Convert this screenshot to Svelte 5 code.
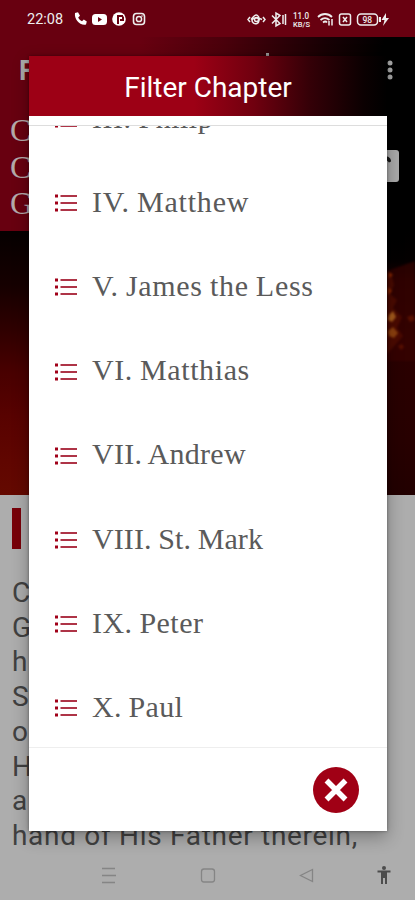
<script>
	// chapters listed in the dialog
	let chapters = [
		{ title: 'III. Philip', spacing: 0.5 },
		{ title: 'IV. Matthew', spacing: 0.8 },
		{ title: 'V. James the Less', spacing: 0.7 },
		{ title: 'VI. Matthias', spacing: 0.6 },
		{ title: 'VII. Andrew', spacing: 0.3 },
		{ title: 'VIII. St. Mark', spacing: 0.1 },
		{ title: 'IX. Peter', spacing: 0.45 },
		{ title: 'X. Paul', spacing: 0.3 }
	];

	// article behind the dialog
	let heading = ['C', 'C', 'G'];
	let lines = ['C', 'G', 'h', 'S', 'o', 'H', 'a', 'hand of His Father therein,'];
</script>

<div class="screen">
	<header class="status">
		<span class="time">22:08</span>
		<svg class="left-icons" viewBox="0 0 74 16" width="74" height="16">
			<path d="M2 2l3-.8 2 3.5-1.8 1.7c.9 1.8 2 2.9 3.8 3.8l1.8-1.8 3 2-.8 3.2C7 15 1 8.500 2 2z" fill="#fff" />
			<rect x="19" y="3" width="15" height="11" rx="3.500" fill="#fff" />
			<path d="M25 6l4 2.500-4 2.500z" fill="#680010" />
			<circle cx="46" cy="8" r="6.800" fill="#fff" />
			<path d="M45 13V5h5M50 5.500v3.500h-3" fill="none" stroke="#680010" stroke-width="2" />
			<rect x="60.500" y="2.500" width="11" height="11" rx="3" fill="none" stroke="#eee" stroke-width="1.600" />
			<circle cx="66" cy="8" r="2.600" fill="none" stroke="#eee" stroke-width="1.500" />
			<circle cx="69" cy="5" r=".8" fill="#eee" />
		</svg>
		<svg class="right-icons" viewBox="0 0 144 18" width="144" height="18">
			<g fill="none" stroke="#eee" stroke-width="1.500">
				<path d="M3 7l-2 2.500L3 12M16 7l2 2.500-2 2.500M4 9.500c3-3 4-6 6.500-4s2 7-.5 8-5-1-5-3 5-4 10-1" />
				<circle cx="9.500" cy="9.500" r="2" />
				<path d="M25 5.500l8 8-4 2.500V3l4 2.500-8 8M36 5v9M38.500 4v11" />
				<path d="M71 7c4-4 10-4 14 0M73.500 10c3-2.500 6-2.500 9 0M76 12.500c1.500-1.200 3-1.200 4 0" stroke-width="1.800" />
				<path d="M82 11v4.500M85 9v6.500" />
				<rect x="92.500" y="4" width="11" height="11" rx="2" />
				<path d="M96 7l4 5M100 7l-4 5" />
				<rect x="110.500" y="4" width="20" height="11" rx="3.500" />
			</g>
			<path d="M132 7v5h2V7zM139 3l-4.500 7h3L136 16l6-8h-3z" fill="#eee" />
			<g fill="#eee" font-family="Roboto, sans-serif" font-weight="500">
				<text x="46" y="8.500" font-size="9" textLength="16" lengthAdjust="spacingAndGlyphs">11.0</text>
				<text x="46" y="17" font-size="7.500" textLength="17" lengthAdjust="spacingAndGlyphs">KB/S</text>
				<text x="115.500" y="12.500" font-size="8.500">98</text>
			</g>
		</svg>
	</header>

	<div class="masthead">
		<div class="toolbar">
			<span class="brand">F</span>
			<span class="tittle"></span>
			<svg class="more" viewBox="0 0 6 20" width="6" height="20" fill="#aaa">
				<circle cx="3" cy="3" r="2.500" />
				<circle cx="3" cy="10" r="2.500" />
				<circle cx="3" cy="17" r="2.500" />
			</svg>
		</div>
		<div class="title-row">
			<div class="title">
				{#each heading as letter}
					<div>{letter}</div>
				{/each}
			</div>
			<svg class="share" viewBox="0 0 30 32" width="30" height="32">
				<rect width="30" height="32" rx="3" fill="#aaa" />
				<path d="M17 6.500c3 0 5 2 5 5l-2 1-3-3z" fill="#161616" />
			</svg>
		</div>
	</div>

	<div class="hero">
		<svg class="embers" viewBox="0 0 28 264" width="28" height="264">
			<path d="M0 40L28 30V130H0z" fill="#3c0400" opacity=".6" />
			<path d="M0 41l5 5 2 8-4 9 7 6-4 8 9 9-5 11 6 8-16 18z" fill="#5c1000" opacity=".6" />
			<path d="M2 41l4 3-4 3zM1 56l4 4-4 4z" fill="#8a2800" />
			<path d="M2 84l4-4 3 6-4 5-4-2z" fill="#a45a1c" />
			<path d="M1 100l5-4 5 6-4 5-5-2z" fill="#8c400e" />
			<path d="M11 115l4-2 2 3-3 3zM20 86l6-2 2 5-5 2z" fill="#581000" />
		</svg>
	</div>

	<article>
		<div class="bar"></div>
		{#each lines as line}
			<p>{line}</p>
		{/each}
	</article>

	<nav>
		<svg viewBox="0 0 415 36" width="415" height="36" fill="none" stroke="#858585" stroke-width="1.300">
			<path d="M102 4.500h13M102 11.500h14M102 18.500h13" />
			<rect x="201.500" y="5" width="13" height="13" rx="2.500" />
			<path d="M312.500 5.500v12l-12-6z" />
			<circle cx="384" cy="4" r="2" fill="#4c4c4c" stroke="none" />
			<path d="M377.500 7.500h13M384 8v6" stroke="#4c4c4c" stroke-width="2" />
			<path d="M381 8h6v12h-2v-6h-2v6h-2z" fill="#4c4c4c" stroke="none" />
		</svg>
	</nav>

	<div class="dialog">
		<h2>Filter Chapter</h2>
		<div class="gap"></div>
		<ul>
			{#each chapters as chapter}
				<li>
					<svg viewBox="0 0 22 18" width="22" height="18">
						<path d="M0 .5h3v3H0zM0 7.500h3v3H0zM0 14.500h3v3H0z" fill="#a00018" />
						<path d="M5.500 2H22M5.500 9H22M5.500 16H22" stroke="#ae3447" stroke-width="2" />
					</svg>
					<span style="letter-spacing: {chapter.spacing}px">{chapter.title}</span>
				</li>
			{/each}
		</ul>
		<div class="actions">
			<button aria-label="Close">
				<svg viewBox="0 0 46 46" width="46" height="46">
					<circle cx="23" cy="23" r="23" fill="#a00015" />
					<path d="M13.500 13.500l19 19M32.500 13.500l-19 19" stroke="#fff" stroke-width="5.500" />
				</svg>
			</button>
		</div>
	</div>
</div>

<style>
	:global(body) {
		margin: 0;
	}

	.screen {
		position: relative;
		display: flex;
		flex-direction: column;
		width: 415px;
		height: 900px;
		overflow: hidden;
		background: #adadad;
		font-family: Roboto, sans-serif;
	}

	/* Status bar */
	.status {
		display: flex;
		align-items: center;
		height: 37px;
		box-sizing: border-box;
		padding: 1px 24px 0 27px;
		background: #680010;
		color: #eee;
	}

	.time {
		width: 46px;
		font-size: 14.500px;
		font-weight: 400;
	}

	.right-icons {
		margin-left: auto;
	}

	/* Page behind the dialog */
	.masthead {
		height: 194px;
		background: linear-gradient(90deg, #680010 0, #680010 140px, #4a000b 225px, #180004 325px, #000 385px);
	}

	.toolbar {
		display: flex;
		align-items: flex-start;
		height: 72px;
		padding: 0 22px 0 19px;
	}

	.brand {
		margin-top: 18px;
		color: #aaa;
		font-size: 27px;
		font-weight: 700;
		line-height: 32px;
	}

	.tittle {
		width: 3px;
		height: 3px;
		margin: 16px 0 0 232px;
		background: #999;
	}

	.more {
		margin: 23px 0 0 auto;
	}

	.title-row {
		display: flex;
		align-items: center;
		justify-content: space-between;
		padding: 3px 16px 0 10px;
	}

	.title {
		color: #b4aaaa;
		font: 32px/36.500px "Liberation Serif", serif;
	}

	.share {
		margin-top: -2px;
	}

	.hero {
		display: flex;
		justify-content: flex-end;
		height: 264px;
		background:
			linear-gradient(180deg, #060000 0, #160000 55px, #300000 100px, #480000 140px, #580200 185px, #600600 230px, #640900 264px) 0 0 / 60px 100% no-repeat,
			linear-gradient(180deg, #000 0, #040000 30px, #1c0000 50px, #2a0000 120px, #270000 210px, #220000 264px);
	}

	.embers {
		filter: blur(1.200px);
	}

	article {
		height: 367px;
		padding: 13px 12px 0;
		box-sizing: border-box;
		color: #414141;
	}

	.bar {
		width: 9px;
		height: 41px;
		margin-bottom: 27px;
		background: #780009;
	}

	p {
		margin: 0;
		font-size: 28px;
		line-height: 34.700px;
		letter-spacing: 0.7px;
		white-space: nowrap;
	}

	nav {
		height: 36px;
		margin-top: 2px;
	}

	/* Dialog */
	.dialog {
		position: absolute;
		top: 56px;
		left: 29px;
		display: flex;
		flex-direction: column;
		width: 358px;
		height: 775px;
		background: #fff;
		box-shadow: 0 6px 16px rgba(0, 0, 0, 0.3), 0 0 3px rgba(0, 0, 0, 0.4);
	}

	h2 {
		height: 60px;
		margin: 0;
		background: linear-gradient(90deg, #9d0015 0, #9d0015 165px, #70000f 225px, #350007 280px, #0b0001 335px, #000 358px);
		color: #fff;
		font-size: 28px;
		font-weight: 400;
		line-height: 63px;
		text-align: center;
	}

	.gap {
		height: 9px;
		border-bottom: 1px solid #ddd;
	}

	ul {
		display: flex;
		flex: 1;
		flex-direction: column;
		min-height: 0;
		margin: 0;
		padding: 0 0 0 26px;
		overflow: hidden;
		list-style: none;
	}

	li {
		display: flex;
		flex-shrink: 0;
		gap: 15px;
		align-items: center;
		height: 84.200px;
		color: #5a5a5a;
		font: 30px/34px "Liberation Serif", serif;
		word-spacing: -1px;
		white-space: nowrap;
	}

	li svg {
		margin-top: 1px;
	}

	li span {
		margin-bottom: 2px;
	}

	/* list is scrolled, only the foot of the first row shows */
	li:first-child {
		margin-top: -49.500px;
	}

	.actions {
		display: flex;
		align-items: center;
		justify-content: flex-end;
		height: 83px;
		padding-right: 28px;
		border-top: 1px solid #eee;
	}

	button {
		padding: 0;
		border: 0;
		background: none;
	}

	button svg {
		display: block;
	}
</style>
